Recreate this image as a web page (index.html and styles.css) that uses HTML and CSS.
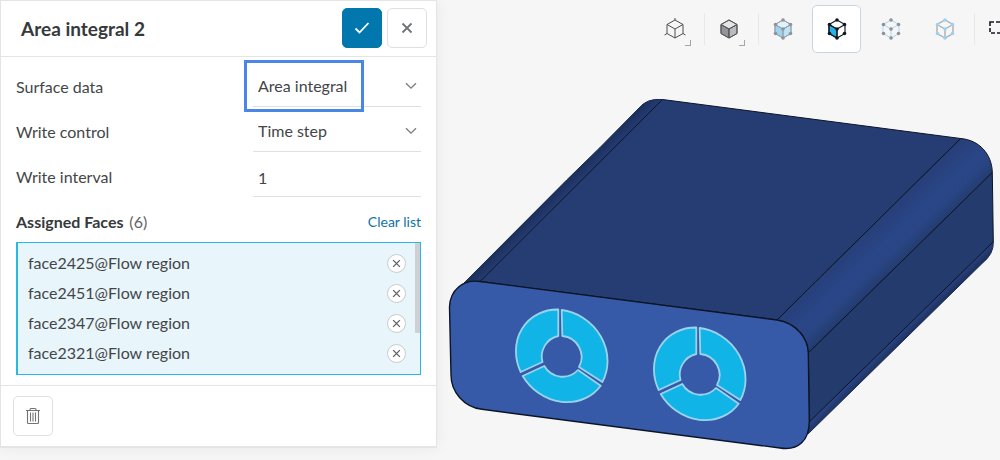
FILE: index.html
```html
<!DOCTYPE html>
<html lang="en">
<head>
<meta charset="utf-8">
<meta name="viewport" content="width=device-width, initial-scale=1">
<title>Area integral 2</title>
<link rel="stylesheet" href="styles.css">
</head>
<body>
<svg class="defs" aria-hidden="true">
  <symbol id="cross" viewBox="0 0 12 12"><path d="M1.500 1.500l9 9M10.500 1.500l-9 9"/></symbol>
  <symbol id="chevron" viewBox="0 0 12 8"><path d="M1 1.200l5 5 5-5"/></symbol>
  <symbol id="cube" viewBox="0 0 28 28"><path d="M14 5l8 4.500v9L14 23l-8-4.500v-9zM6 9.500l8 4.500 8-4.500M14 14v9"/></symbol>
  <symbol id="dots" viewBox="0 0 28 28"><circle cx="14" cy="5" r="1.800"/><circle cx="21.500" cy="9.500" r="1.800"/><circle cx="21.500" cy="18.500" r="1.800"/><circle cx="14" cy="23" r="1.800"/><circle cx="6.500" cy="18.500" r="1.800"/><circle cx="6.500" cy="9.500" r="1.800"/><circle cx="14" cy="14" r="1.800"/></symbol>
</svg>
<div class="app">
  <form class="panel">
    <header class="panel-header">
      <h1 class="panel-title">Area integral 2</h1>
      <button class="btn btn-primary" type="button" aria-label="Apply"><svg class="icon-check" viewBox="0 0 16 14"><path d="M1.500 7.500l4 4L14.500 2"/></svg></button>
      <button class="btn" type="button" aria-label="Close"><svg class="icon-close"><use href="#cross"/></svg></button>
    </header>
    <div class="panel-body">
      <div class="row">
        <label for="surface">Surface data</label>
        <div class="field field-marked">
          <select id="surface"><option>Area integral</option></select>
          <svg class="chevron"><use href="#chevron"/></svg>
        </div>
      </div>
      <div class="row">
        <label for="control">Write control</label>
        <div class="field">
          <select id="control"><option>Time step</option></select>
          <svg class="chevron"><use href="#chevron"/></svg>
        </div>
      </div>
      <div class="row">
        <label for="interval">Write interval</label>
        <div class="field"><input id="interval" type="text" value="1"></div>
      </div>
      <div class="list-header">
        <h2 class="list-title">Assigned Faces <span class="count">(6)</span></h2>
        <a class="clear" href="#">Clear list</a>
      </div>
      <ul class="faces">
        <li class="face">face2425@Flow region<button class="remove" type="button" aria-label="Remove face2425"><svg><use href="#cross"/></svg></button></li>
        <li class="face">face2451@Flow region<button class="remove" type="button" aria-label="Remove face2451"><svg><use href="#cross"/></svg></button></li>
        <li class="face">face2347@Flow region<button class="remove" type="button" aria-label="Remove face2347"><svg><use href="#cross"/></svg></button></li>
        <li class="face">face2321@Flow region<button class="remove" type="button" aria-label="Remove face2321"><svg><use href="#cross"/></svg></button></li>
      </ul>
    </div>
    <footer class="panel-footer">
      <button class="btn" type="button" aria-label="Delete"><svg class="icon-trash" viewBox="0 0 16 18"><path d="M1 3.500h14M5 3.500V2.500Q5 1.500 6 1.500h4q1 0 1 1v1M2.500 3.500v12q0 1 1 1h9q1 0 1-1v-12M5.500 5.500v9M8 5.500v9M10.500 5.500v9"/></svg></button>
    </footer>
  </form>

  <main class="viewer">
    <svg class="model" viewBox="437 0 563 460" role="img" aria-label="Enclosure model">
      <defs>
        <linearGradient id="bevel" gradientUnits="userSpaceOnUse" x1="868" y1="230" x2="901" y2="264">
          <stop offset="0" stop-color="#273f79"/><stop offset=".45" stop-color="#2a4687"/><stop offset=".7" stop-color="#294584"/><stop offset="1" stop-color="#233b6e"/>
        </linearGradient>
        <linearGradient id="edge" gradientUnits="userSpaceOnUse" x1="558" y1="189" x2="567" y2="198">
          <stop offset="0" stop-color="#1c2f5b"/><stop offset="1" stop-color="#263f78"/>
        </linearGradient>
        <linearGradient id="under" gradientUnits="userSpaceOnUse" x1="895" y1="338" x2="902" y2="345">
          <stop offset="0" stop-color="#294482"/><stop offset="1" stop-color="#1b2d57"/>
        </linearGradient>
        <g id="ring">
          <path d="M558.300 309.500A49 44 45 0 0 520.700 372L542.500 362A21 21 0 0 1 558.300 336Z"/>
          <path d="M561.700 310A49 44 45 0 1 602.300 382L579 367A21 21 0 0 0 562.300 336Z"/>
          <path d="M522.700 376L544.300 366A21 21 0 0 0 578 370L600.700 385.700A49 44 45 0 1 522.700 376Z"/>
        </g>
      </defs>
      <g class="outline">
        <path class="soft" fill="url(#edge)" d="M464 283L566.700 180L600 147.500L639 108Q647 98 662.500 99.500L480 281.500Z"/>
        <path class="soft" fill="url(#under)" d="M809.500 421.700L993.300 241.700Q994 254 982 263.500L808 434Z"/>
        <path fill="#263d74" d="M480 281.500L662.500 99.500L960.700 138.500L777 320Z"/>
        <path fill="url(#bevel)" d="M777 320L960.700 138.500C979 140 992 154 992.300 172.500L808.300 353Q806 325 777 320Z"/>
        <path fill="#233b6d" d="M808.300 353L992.300 172.500L993.300 241.700L809.500 421.700Z"/>
        <path class="front" d="M480 281.500L777 320C796 323 808 338 808.300 353L809.300 421.700C809 440 799 451 780 448L482 409.300C464 407 451 392 451 375L449.500 307C450 290 463 279 480 281.500Z"/>
      </g>
      <g class="rings"><use href="#ring"/><use href="#ring" transform="translate(138 18)"/></g>
    </svg>
    <nav class="toolbar" aria-label="View tools">
      <button class="tool tool-menu" type="button" aria-label="View"><svg class="view" viewBox="0 0 28 28"><use href="#cube"/><path d="M14 5V3M6 18.500l-2.500 1.500M22 18.500l2.500 1.500"/></svg></button>
      <button class="tool tool-menu tool-divided" type="button" aria-label="Shading"><svg class="solid" viewBox="0 0 28 28"><path fill="#939596" d="M6 9.500l8 4.500v9l-8-4.500z"/><path fill="#b9bbbc" d="M14 14l8-4.500v9L14 23z"/><path fill="#e3e5e6" d="M14 5l8 4.500-8 4.500-8-4.500z"/><use href="#cube"/></svg></button>
      <button class="tool tool-divided" type="button" aria-label="Select volumes"><svg class="volume" viewBox="0 0 28 28"><path fill="#9dd4f3" d="M6 9.500l8 4.500v9l-8-4.500z"/><path fill="#bce3f7" d="M14 14l8-4.500v9L14 23z"/><path fill="#e0f2fb" d="M14 5l8 4.500-8 4.500-8-4.500z"/><use href="#cube"/><use class="nodes" href="#dots"/></svg></button>
      <button class="tool tool-active" type="button" aria-label="Select faces" aria-pressed="true"><svg class="faces-icon" viewBox="0 0 28 28"><path fill="#26b2e4" d="M6 9.500l8 4.500v9l-8-4.500z"/><use href="#cube"/><use class="nodes" href="#dots"/></svg></button>
      <button class="tool" type="button" aria-label="Select vertices"><svg class="vertices" viewBox="0 0 28 28"><use href="#cube"/><use class="nodes" href="#dots"/></svg></button>
      <button class="tool" type="button" aria-label="Select edges"><svg class="edges" viewBox="0 0 28 28"><use href="#cube"/><use class="nodes" href="#dots"/></svg></button>
      <button class="tool tool-divided" type="button" aria-label="Box selection"><svg class="box" viewBox="0 0 28 28"><rect x="5" y="7" width="18" height="11"/></svg></button>
    </nav>
  </main>
</div>
</body>
</html>
```
FILE: styles.css
```css
* { box-sizing: border-box; }

body {
  margin: 0;
  background: #f6f6f6;
  color: #434648;
  font: 16px/20px Lato, "Liberation Sans", sans-serif;
}

button, input, select { font: inherit; color: inherit; }
svg { fill: none; stroke: currentColor; }
.defs { display: none; }

.app {
  display: flex;
  align-items: flex-start;
  min-height: 100vh;
  overflow: hidden;
}

.panel {
  position: relative;
  z-index: 1;
  flex: 0 0 437px;
  background: #fff;
  border: 1px solid #e3e4e4;
  border-bottom-width: 2px;
  box-shadow: 0 0 14px rgba(0, 0, 0, .06);
}

.panel-header {
  display: flex;
  align-items: center;
  gap: 5px;
  padding: 7px 9px 8px 20px;
  border-bottom: 1px solid #e3e4e4;
}

.panel-title {
  flex: 1;
  margin: 0;
  padding-top: 2px;
  color: #36393b;
  font-size: 19px;
  line-height: 24px;
  font-weight: 700;
}

.btn {
  display: grid;
  place-items: center;
  width: 40px;
  height: 40px;
  padding: 0;
  border: 1px solid #dfe0e1;
  border-radius: 5px;
  background: #fff;
  color: #707476;
}

.btn-primary {
  border-color: #0277ad;
  background: #0277ad;
  color: #fff;
}

.icon-check { width: 16px; height: 14px; stroke-width: 1.8; }
.icon-close { width: 12px; height: 12px; stroke-width: 1.8; }
.icon-trash { width: 16px; height: 18px; stroke-width: 1.1; }

.panel-body { padding: 5px 15px 10px; }

.row {
  display: grid;
  grid-template-columns: 237px 1fr;
  align-items: stretch;
  height: 45px;
}

.row label { padding-top: 15px; }

.field {
  position: relative;
  display: grid;
  align-items: center;
  padding-top: 4px;
  border-bottom: 1px solid #dfe0e1;
}

.field > * { grid-area: 1 / 1; }

.field select, .field input {
  width: 100%;
  height: 100%;
  padding: 0 24px 0 5px;
  border: 0;
  outline: 0;
  background: transparent;
  appearance: none;
}

.field input { padding-top: 2px; }

.field-marked::after {
  content: "";
  position: absolute;
  inset: -2px 57px -6px -9px;
  border: 3px solid #4a86e8;
  pointer-events: none;
}

.chevron {
  justify-self: end;
  width: 12px;
  height: 8px;
  margin-right: 4px;
  color: #787b7d;
  stroke-width: 1.3;
  pointer-events: none;
}

.list-header {
  display: flex;
  align-items: center;
  justify-content: space-between;
  height: 45px;
  padding-top: 5px;
}

.list-title { margin: 0; color: #36393b; font-size: 16px; line-height: 20px; }
.count { margin-left: 2px; font-weight: 400; color: #606466; }

.clear {
  color: #0e72a8;
  font-size: 14px;
  text-decoration: none;
}

.faces {
  position: relative;
  margin: 0;
  padding: 5px 14px 6px 10px;
  list-style: none;
  border: 1px solid #29b8e2;
  border-left-width: 2px;
  background: #e8f5fb;
}

.faces::after {
  content: "";
  position: absolute;
  top: 0;
  right: 0;
  width: 5px;
  height: 90px;
  background: #cdd1d3;
}

.face {
  display: flex;
  align-items: center;
  justify-content: space-between;
  height: 30px;
}

.remove {
  display: grid;
  place-items: center;
  width: 19px;
  height: 19px;
  padding: 0;
  border: 1px solid #c9cccd;
  border-radius: 50%;
  background: #fff;
  color: #5f6365;
}

.remove svg { width: 9px; height: 9px; stroke-width: 1.8; }

.panel-footer {
  padding: 10px 12px;
  border-top: 1px solid #e3e4e4;
}

.viewer {
  position: relative;
  flex: 1;
  min-width: 0;
}

.model {
  display: block;
  width: 100%;
  height: 100vh;
}

.outline { stroke: #0c1426; stroke-width: 1; stroke-linejoin: round; }
.soft { stroke: #1b2b50; }
.front { fill: #365aa8; stroke-width: 1.4; }
.rings { fill: #10b4e6; stroke: #9bd3ee; stroke-width: 1.8; stroke-linejoin: round; }

.toolbar {
  position: absolute;
  inset: 5px 0 auto 0;
  display: flex;
  gap: 5px;
  padding-left: 213px;
  overflow: hidden;
}

.tool {
  position: relative;
  flex: 0 0 49px;
  display: grid;
  place-items: center;
  height: 48px;
  padding: 0;
  border: 1px solid transparent;
  border-radius: 5px;
  background: transparent;
}

.tool svg { width: 28px; height: 28px; }

.tool-active { border-color: #c5d8e2; background: #fff; }

.tool-divided::before {
  content: "";
  position: absolute;
  top: 7px;
  left: -1px;
  width: 1px;
  height: 32px;
  background: #e6e8e9;
}

.tool-menu::after {
  content: "";
  position: absolute;
  right: 7px;
  bottom: 6px;
  width: 5px;
  height: 5px;
  border: solid #a3a6a8;
  border-width: 0 1px 1px 0;
}

.view { color: #4b4e50; }
.solid { color: #56595b; }
.volume { color: #9aa3a9; }
.volume .nodes { fill: #8f9598; stroke: none; }
.faces-icon { color: #171c25; stroke-width: 1.2; }
.faces-icon .nodes { fill: #111722; stroke: none; }
.vertices { color: #a5d8f4; }
.vertices .nodes { fill: #8f9294; stroke: none; }
.edges { color: #a9afb3; stroke-width: 1.4; }
.edges .nodes { fill: #9bd2f4; stroke: none; }
.box { color: #15191f; stroke-width: 1.6; stroke-dasharray: 4 2; }
```
